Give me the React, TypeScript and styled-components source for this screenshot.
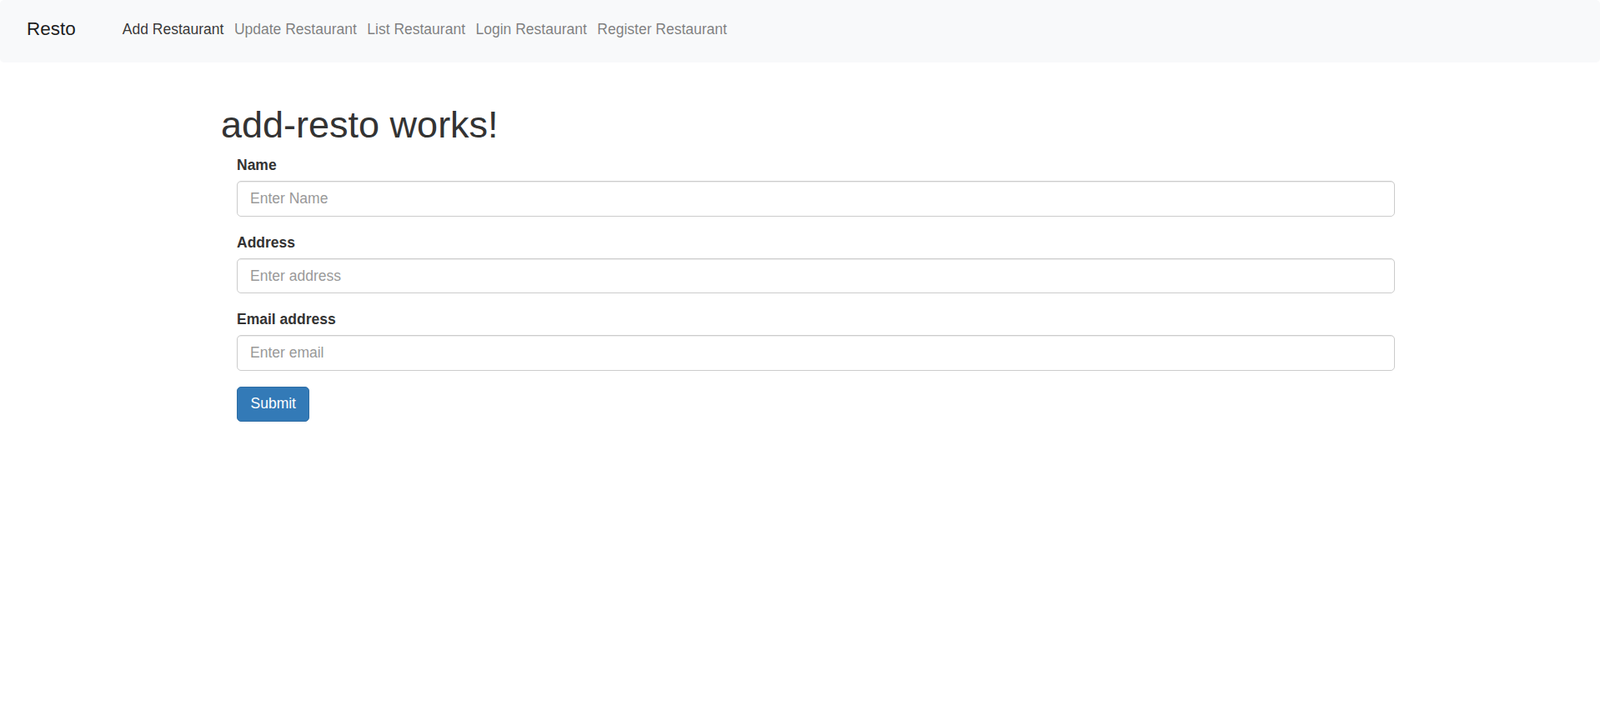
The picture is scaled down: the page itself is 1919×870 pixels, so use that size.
import styled, { createGlobalStyle } from 'styled-components'

const GlobalStyle = createGlobalStyle`
  html, body {
    margin: 0;
    padding: 0;
    background: #ffffff;
  }
  body {
    font-family: 'Liberation Sans', Arial, Helvetica, sans-serif;
    font-size: 17.5px;
    line-height: 1.42857;
    color: #333333;
  }
  * {
    box-sizing: border-box;
  }
`

const links = ['Add Restaurant', 'Update Restaurant', 'List Restaurant', 'Login Restaurant', 'Register Restaurant']

const App = () => {
  return (
    <>
      <GlobalStyle />
      <Navbar>
        <Brand href="#">Resto</Brand>
        <NavList>
          {links.map((label, i) => (
            <NavLink key={label} href="#" active={i === 0}>
              {label}
            </NavLink>
          ))}
        </NavList>
      </Navbar>
      <Content>
        <Title>add-resto works!</Title>
        <Form onSubmit={(e) => e.preventDefault()}>
          <FormGroup>
            <Label>Name</Label>
            <Input type="text" placeholder="Enter Name" />
          </FormGroup>
          <FormGroup>
            <Label>Address</Label>
            <Input type="text" placeholder="Enter address" />
          </FormGroup>
          <FormGroup>
            <Label>Email address</Label>
            <Input type="email" placeholder="Enter email" />
          </FormGroup>
          <SubmitButton type="submit">Submit</SubmitButton>
        </Form>
      </Content>
    </>
  )
}

const Navbar = styled.nav`
  display: flex;
  align-items: center;
  height: 75px;
  padding: 0 0 4px 32px;
  background: #f8f9fa;
  border-radius: 5px;
`
const Brand = styled.a`
  font-size: 22.5px;
  line-height: 1;
  color: rgba(0, 0, 0, 0.9);
  text-decoration: none;
  margin-right: 56px;
`
const NavList = styled.div`
  display: flex;
  align-items: center;
  gap: 12.5px;
`
const NavLink = styled.a<{ active?: boolean }>`
  font-size: 17.5px;
  line-height: 1.5;
  text-decoration: none;
  color: ${(p) => (p.active ? 'rgba(0, 0, 0, 0.8)' : 'rgba(0, 0, 0, 0.5)')};
`
const Content = styled.main`
  width: 1426px;
  margin-left: 265px;
  padding-top: 50px;
`
const Title = styled.h1`
  margin: 0 0 11.5px;
  font-size: 45px;
  font-weight: 500;
  line-height: 1.1;
  color: #333333;
`
const Form = styled.form`
  padding: 0 18px 0 19px;
`
const FormGroup = styled.div`
  margin-bottom: 18.75px;
`
const Label = styled.label`
  display: block;
  margin-bottom: 6.25px;
  font-weight: 700;
  line-height: 25px;
  color: #333333;
`
const Input = styled.input`
  display: block;
  width: 100%;
  height: 42.5px;
  padding: 7.5px 15px;
  font-family: inherit;
  font-size: 17.5px;
  color: #555555;
  background: #ffffff;
  border: 1.25px solid #cccccc;
  border-radius: 5px;
  box-shadow: inset 0 1px 1px rgba(0, 0, 0, 0.075);
  outline: none;
  &::placeholder {
    color: #999999;
  }
`
const SubmitButton = styled.button`
  display: inline-block;
  height: 42px;
  padding: 7.5px 15.5px;
  font-family: inherit;
  font-size: 17.5px;
  line-height: 1.42857;
  color: #ffffff;
  background: #337ab7;
  border: 1.25px solid #2e6da4;
  border-radius: 5px;
  cursor: pointer;
`
export default App
